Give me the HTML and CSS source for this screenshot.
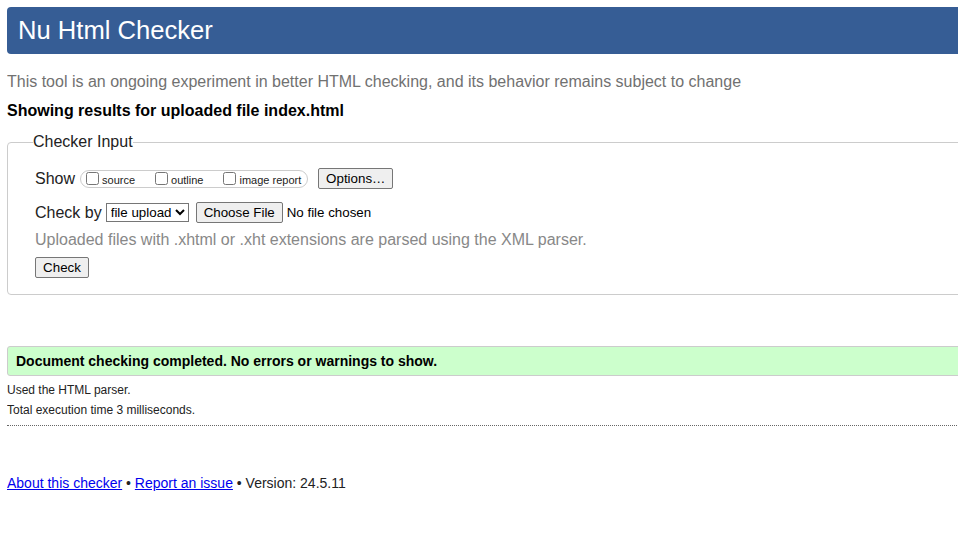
FILE: index.html
```html
<!DOCTYPE html>
<html lang="en">
<head>
<meta charset="utf-8">
<title>Showing results for uploaded file index.html - Nu Html Checker</title>
<link rel="stylesheet" href="styles.css">
</head>
<body>
<div class="page">
  <h1 class="title">Nu Html Checker</h1>
  <p class="intro">This tool is an ongoing experiment in better HTML checking, and its behavior remains subject to change</p>
  <h2 class="results">Showing results for uploaded file index.html</h2>

  <fieldset class="input-box">
    <legend class="input-legend">Checker Input</legend>
    <div class="row row-show">
      <span class="row-label">Show</span>
      <span class="show-group">
        <label class="opt"><input type="checkbox"><span>source</span></label>
        <label class="opt"><input type="checkbox"><span>outline</span></label>
        <label class="opt opt-last"><input type="checkbox"><span>image report</span></label>
      </span>
      <button class="btn btn-options" type="button">Options…</button>
    </div>
    <div class="row row-check">
      <span class="row-label">Check by</span>
      <select class="by-select"><option>file upload</option></select>
      <button class="btn btn-file" type="button">Choose File</button>
      <span class="file-name">No file chosen</span>
    </div>
    <p class="hint">Uploaded files with .xhtml or .xht extensions are parsed using the XML parser.</p>
    <div class="row row-submit">
      <button class="btn btn-check" type="button">Check</button>
    </div>
  </fieldset>

  <div class="success">Document checking completed. No errors or warnings to show.</div>
  <p class="stats">Used the HTML parser.</p>
  <p class="stats">Total execution time 3 milliseconds.</p>
  <hr class="rule">

  <p class="footer"><a href="#">About this checker</a> • <a href="#">Report an issue</a> • Version: 24.5.11</p>
</div>
</body>
</html>
```
FILE: styles.css
```css
html {
  overflow: hidden;
  background: #fff;
}
body {
  margin: 7px 0 7px 7px;
  overflow: hidden;
  font-family: "Liberation Sans", Arial, sans-serif;
  color: #000;
}
.page {
  width: 980px;
}
.title {
  margin: 0;
  height: 47px;
  box-sizing: border-box;
  padding: 8px 11px 0;
  background: #365d95;
  color: #fff;
  font-size: 25.6px;
  font-weight: normal;
  line-height: 30px;
  border-radius: 4px;
}
.intro {
  margin: 19px 0 0;
  font-size: 16px;
  line-height: 18.4px;
  color: #717171;
}
.results {
  margin: 11px 0 0;
  font-size: 16px;
  line-height: 18.4px;
  font-weight: bold;
}
.input-box {
  margin: 12.6px 0 0;
  padding: 0 25px 16px 27px;
  border: 1px solid #cccccc;
  border-radius: 4px;
  min-width: 0;
}
.input-legend {
  margin-left: -2px;
  padding: 0;
  font-size: 16px;
  line-height: 18.4px;
  color: #222;
}
.row {
  display: flex;
  align-items: center;
  height: 22px;
}
.row-show {
  margin-top: 16px;
}
.row-check {
  margin-top: 12px;
}
.row-label {
  font-size: 16px;
  color: #222;
  margin-right: 5px;
}
.row-check .row-label {
  margin-right: 4px;
}
.show-group {
  display: inline-flex;
  align-items: center;
  height: 18px;
  box-sizing: border-box;
  border: 1px solid #cccccc;
  border-radius: 9px;
  padding: 0 6px 0 1px;
  font-size: 11px;
  color: #222;
}
.opt {
  display: inline-flex;
  align-items: center;
  margin-right: 16px;
}
.opt-last {
  margin-right: 0;
}
.opt input {
  width: 13px;
  height: 13px;
  margin: 0 3px 0 4px;
}
.opt span {
  position: relative;
  top: 1px;
}
.btn {
  font-family: "Liberation Sans", Arial, sans-serif;
  font-size: 13.333px;
  color: #000;
  background: #efefef;
  border: 1px solid #767676;
  border-radius: 2px;
  padding: 1px 6px;
  height: 21px;
  line-height: 16px;
}
.btn-options {
  margin-left: 10px;
  width: 75px;
}
.by-select {
  font-family: "Liberation Sans", Arial, sans-serif;
  font-size: 13.333px;
  width: 83px;
  height: 19px;
  margin: 0;
  color: #000;
  background: #fff;
  border: 1px solid #767676;
  border-radius: 0;
}
.btn-file {
  margin-left: 7px;
  width: 87px;
}
.file-name {
  margin-left: 4px;
  font-size: 13.333px;
}
.hint {
  margin: 7px 0 0;
  font-size: 16px;
  line-height: 18.4px;
  color: #888;
}
.row-submit {
  margin-top: 8px;
  height: 21px;
}
.btn-check {
  width: 54px;
}
.success {
  margin-top: 51px;
  padding: 6px 8px;
  border: 1px solid #cccccc;
  border-radius: 3px;
  background: #ccffcc;
  font-size: 14px;
  line-height: 16px;
  font-weight: bold;
}
.stats {
  margin: 7.4px 0 0;
  font-size: 12px;
  line-height: 13.8px;
  color: #222;
}
.stats + .stats {
  margin-top: 6.2px;
}
.rule {
  margin: 8px 0 0;
  border: 0;
  border-top: 1px dotted #666;
  height: 0;
}
.footer {
  margin: 49px 0 0;
  font-size: 14px;
  line-height: 16px;
  color: #222;
}
.footer a {
  color: #0000ee;
}
```
